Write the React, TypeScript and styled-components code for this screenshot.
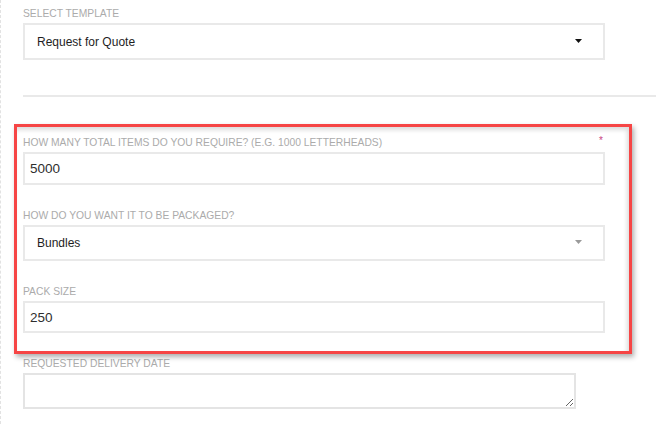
import React from "react";
import styled, { createGlobalStyle } from "styled-components";

const GlobalStyle = createGlobalStyle`
  html, body { margin: 0; padding: 0; background: #fff; }
  body { font-family: "Liberation Sans", Arial, sans-serif; }
`;

const Page = styled.div`
  box-sizing: border-box;
  width: 656px;
  height: 424px;
  overflow: hidden;
  padding: 8px 0 0 22px;
  border-left: 1px dashed #e2e2e2;
`;

const Field = styled.div<{ $last?: boolean }>`
  display: flex;
  flex-direction: column;
  gap: 3px;
  margin-bottom: ${(p) => (p.$last ? "0" : "25px")};
`;

const Label = styled.label`
  font-size: 10.3px;
  line-height: 12px;
  color: #ababab;
  text-transform: uppercase;
`;

const SelectBox = styled.div<{ $h: number; $muted?: boolean }>`
  box-sizing: border-box;
  width: 582px;
  height: ${(p) => p.$h}px;
  border: 2px solid #e9e9e9;
  display: flex;
  align-items: center;
  justify-content: space-between;
  padding: 0 21px 0 12px;
  font-size: 12px;
  color: #1e1e1e;
  svg { fill: ${(p) => (p.$muted ? "#9a9a9a" : "#111")}; margin-top: -2px; }
`;

const TextInput = styled.input<{ $h: number }>`
  box-sizing: border-box;
  width: 582px;
  height: ${(p) => p.$h}px;
  border: 2px solid #e9e9e9;
  padding: 0 5px;
  font-family: "Liberation Sans", Arial, sans-serif;
  font-size: 13.5px;
  color: #2e2e2e;
  outline: none;
  background: #fff;
`;

const Divider = styled.hr`
  border: 0;
  height: 2px;
  background: #e9e9e9;
  margin: 35px 0 27px 0;
`;

const Highlight = styled.section`
  position: relative;
  width: 582px;
  margin: 0 0 4px -9px;
  padding: 10px 24px 18px 6px;
  border: 3px solid #f64545;
  box-shadow: 2px 3px 5px rgba(0, 0, 0, 0.32), inset -2px 3px 4px rgba(0, 0, 0, 0.14);
`;

const Required = styled.span`
  position: absolute;
  top: 8px;
  right: 26px;
  font-size: 10px;
  line-height: 12px;
  color: #c8457f;
`;

const TextArea = styled.textarea`
  box-sizing: border-box;
  width: 553px;
  height: 36px;
  border: 2px solid #e4e4e4;
  resize: both;
  font-family: "Liberation Sans", Arial, sans-serif;
  outline: none;
  display: block;
`;

const Caret = () => (
  <svg width="7" height="4" viewBox="0 0 7 4">
    <path d="M0 0 L7 0 L3.5 4 Z" />
  </svg>
);

export default function App() {
  return (
    <>
      <GlobalStyle />
      <Page>
        <Field $last>
          <Label>Select Template</Label>
          <SelectBox $h={37}>
            <span>Request for Quote</span>
            <Caret />
          </SelectBox>
        </Field>
        <Divider />
        <Highlight>
          <Required>*</Required>
          <Field>
            <Label>How many total items do you require? (e.g. 1000 letterheads)</Label>
            <TextInput $h={33} defaultValue="5000" />
          </Field>
          <Field>
            <Label>How do you want it to be packaged?</Label>
            <SelectBox $h={36} $muted>
              <span>Bundles</span>
              <Caret />
            </SelectBox>
          </Field>
          <Field $last>
            <Label>Pack Size</Label>
            <TextInput $h={32} defaultValue="250" />
          </Field>
        </Highlight>
        <Field $last>
          <Label>Requested Delivery Date</Label>
          <TextArea />
        </Field>
      </Page>
    </>
  );
}
